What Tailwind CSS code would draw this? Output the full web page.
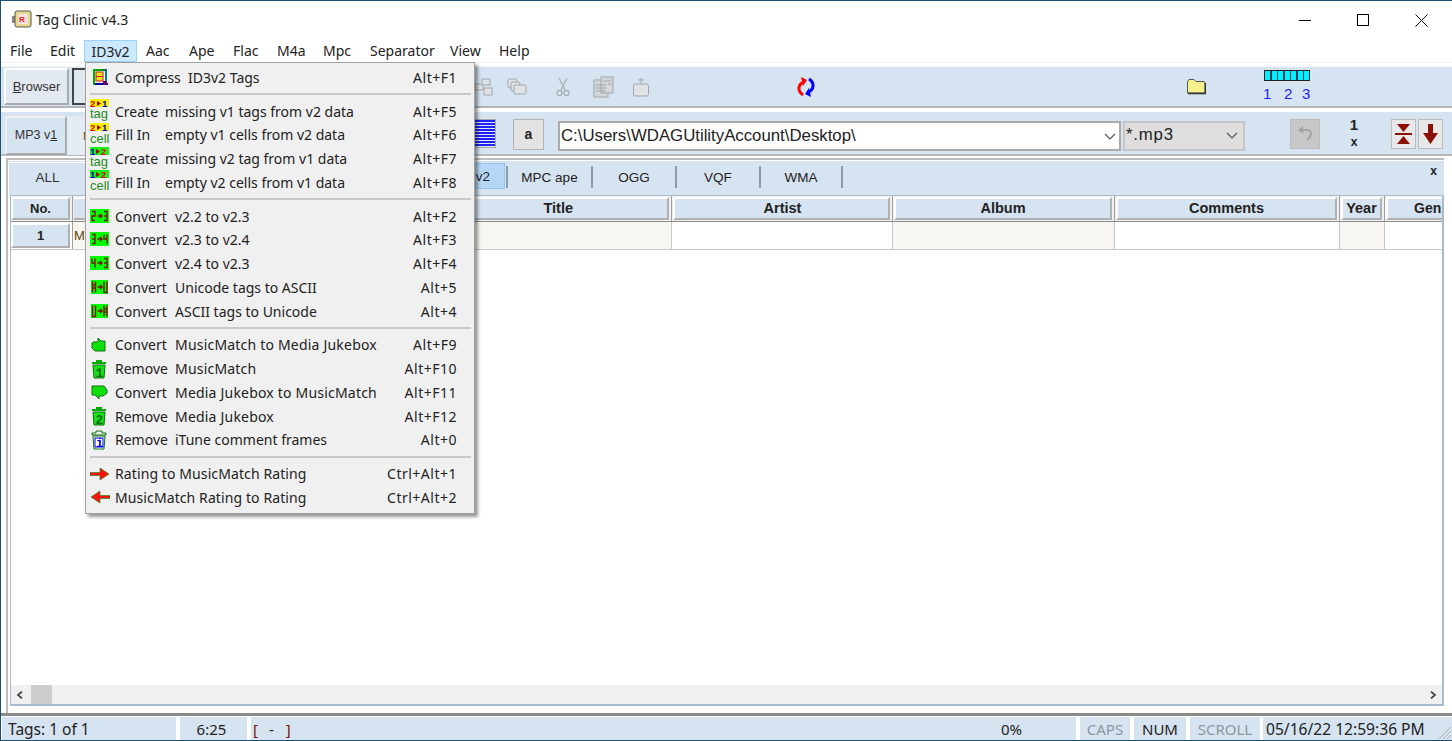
<!DOCTYPE html>
<html><head><meta charset="utf-8"><title>Tag Clinic v4.3</title>
<script src="https://cdn.jsdelivr.net/npm/@tailwindcss/browser@4"></script></head>
<body class="m-0 bg-white">
<div class="relative w-[1452px] h-[741px] overflow-hidden flex flex-col bg-white border-t border-b border-l border-[#1c4f70] font-['Noto_Sans',sans-serif] text-[14px] text-[#222]">

<!-- title bar -->
<div class="h-[39px] shrink-0 flex items-center bg-white">
  <svg class="ml-[11px] mt-[-3px]" width="20" height="20" viewBox="0 0 20 20"><rect x="0" y="7" width="3" height="7" fill="#888"/><rect x="3" y="2" width="16" height="16" rx="2" fill="#e6d98a" stroke="#555"/><rect x="6" y="5" width="10" height="10" fill="#f5e0e0"/><text x="7" y="13" font-size="8" font-weight="700" fill="#e02020" font-family="Liberation Sans">R</text></svg>
  <span class="ml-[4px] mt-[-3px] text-[14px] text-[#222]">Tag Clinic v4.3</span>
  <div class="ml-auto flex items-center h-full mt-[-1px] mr-[1px]">
    <div class="w-[58px] flex justify-center"><div class="w-[12px] h-px bg-black"></div></div>
    <div class="w-[58px] flex justify-center"><div class="w-[12px] h-[12px] border border-black"></div></div>
    <div class="w-[58px] flex justify-center mr-[1px]"><svg width="13" height="13" viewBox="0 0 13 13"><path d="M.5.5l12 12M12.5.5l-12 12" stroke="#111" fill="none"/></svg></div>
  </div>
</div>

<!-- menu bar -->
<div class="h-[23px] shrink-0 flex items-center text-[14px] leading-[20px] bg-white border-b border-[#f0f0f0] pl-[9px]">
  <span class="w-[40px]">File</span>
  <span class="w-[34px]">Edit</span>
  <span class="w-[53px] h-[22px] leading-[21px] text-center bg-[#cce8ff] border border-[#99d1ff] mr-[9px]">ID3v2</span>
  <span class="w-[43px]">Aac</span>
  <span class="w-[44px]">Ape</span>
  <span class="w-[44px]">Flac</span>
  <span class="w-[46px]">M4a</span>
  <span class="w-[47px]">Mpc</span>
  <span class="w-[80px]">Separator</span>
  <span class="w-[49px]">View</span>
  <span>Help</span>
</div>

<!-- toolbar 1 -->
<div class="h-[42px] shrink-0 mt-[3px] flex items-center bg-[#d6e3f0] border-t border-[#f6f6f6] border-b-2 border-b-[#b4b4b4] relative">
  <div class="ml-[3px] w-[65px] h-[37px] flex items-center justify-center bg-[#e3e9f0] border-2 border-t-white border-l-white border-r-[#aaa] border-b-[#aaa] font-['Liberation_Sans',sans-serif] text-[13px] text-[#333]"><span><u>B</u>rowser</span></div>
  <div class="ml-[3px] w-[30px] h-[37px] flex items-center justify-center border-2 border-[#444] bg-[#dfe7ef] text-[12px]">-</div>
  <div class="ml-[372px] flex items-center">
    <svg width="20" height="20" viewBox="0 0 20 20" fill="#dfe3e6" stroke="#a2a7ab"><rect x="1" y="7" width="8" height="6"/><rect x="8" y="2" width="8" height="6"/><rect x="10" y="11" width="8" height="7"/></svg>
    <svg class="ml-[13px]" width="22" height="20" viewBox="0 0 22 20" fill="#dfe3e6" stroke="#a2a7ab"><rect x="1" y="2" width="9" height="9" rx="2"/><rect x="4" y="5" width="9" height="9" rx="2"/><rect x="7" y="8" width="12" height="9" rx="1"/></svg>
    <svg class="ml-[27px]" width="14" height="20" viewBox="0 0 14 20" fill="none" stroke="#aab0b4" stroke-width="1.300"><path d="M3 1l6 12M11 1L5 13"/><circle cx="3.500" cy="16" r="2.500"/><circle cx="10.500" cy="16" r="2.500"/></svg>
    <svg class="ml-[23px]" width="22" height="22" viewBox="0 0 22 22" fill="#d2d7db" stroke="#a0a6ab"><rect x="1" y="4" width="14" height="17"/><rect x="8" y="1" width="12" height="16"/><path d="M3 9h10M3 12h10M3 15h10M10 5h8M15 8h4" fill="none"/></svg>
    <svg class="ml-[17px]" width="18" height="20" viewBox="0 0 18 20" fill="#dfe3e6" stroke="#a2a7ab"><rect x="1.500" y="7" width="15" height="12" rx="2"/><path d="M9 1v6M6 3h6" fill="none"/></svg>
  </div>
  <svg class="ml-[145px]" width="22" height="22" viewBox="0 0 22 22" fill="none" stroke-width="3"><path d="M9 6C3 8 2 15 8 19" stroke="#f00"/><path d="M6 1l6 3-4 6z" fill="#f00"/><path d="M13 16C19 14 20 7 14 3" stroke="#00f"/><path d="M16 21l-6-3 4-6z" fill="#00f"/></svg>
  <svg class="ml-[369px]" width="20" height="17" viewBox="0 0 20 17"><path d="M1.500 15V3.500L3 1.500h5l2 2h8l1 1.500V15z" fill="#f5f08c" stroke="#555"/><path d="M2 15.500h17.500V5" fill="none" stroke="#333" stroke-width="1.500"/></svg>
  <div class="ml-[58px] flex flex-col w-[48px]">
    <div class="w-[46px] h-[11px] border border-[#222] bg-[repeating-linear-gradient(90deg,#00f0ff_0,#00f0ff_5px,#1c3a5a_5px,#1c3a5a_6.500px)]"></div>
    <div class="mt-[3px] -ml-px flex text-[15px] leading-[20px] text-[#1d1df0] font-['Liberation_Sans',sans-serif]"><span class="w-[21px]">1</span><span class="w-[18px]">2</span><span>3</span></div>
  </div>
</div>

<!-- toolbar 2 -->
<div class="h-[47px] shrink-0 mt-[1px] flex items-center bg-[#d6e3f0] border-t-[3px] border-white border-b-2 border-b-[#b9b9b9] relative">
  <div class="ml-[4px] mt-[4px] w-[62px] h-[39px] flex items-center justify-center bg-[#d6e3f0] border-2 border-t-[#eee] border-l-[#eee] border-r-[#aaa] border-b-[#aaa] text-[12.500px] font-['Liberation_Sans',sans-serif] text-[#333]"><span>MP3 v<u>1</u></span></div>
  <div class="w-[30px] h-[39px] mt-[4px] bg-[#e4ebf2] pl-[16px] pt-[12px] text-[11px] text-[#664400] font-['Liberation_Sans',sans-serif]">M</div>
  <div class="ml-[373px] w-[26px] h-[29px] mt-[1px] border border-[#aaa] bg-[repeating-linear-gradient(180deg,#1e22f0_0,#1e22f0_2px,#dfe6f8_2px,#dfe6f8_3px)]"></div>
  <div class="ml-[17px] w-[31px] h-[31px] mt-[2px] flex items-center justify-center bg-[#e3e3e3] border border-[#b4b4b4] font-['Liberation_Sans',sans-serif] font-bold text-[14px]">a</div>
  <div class="ml-[14px] w-[563px] h-[30px] mt-[6px] flex items-center bg-white border-2 border-[#aaa] pl-[1px] font-['Liberation_Sans',sans-serif] text-[16.800px] leading-none text-[#222]">
    <span>C:\Users\WDAGUtilityAccount\Desktop\</span>
    <svg class="ml-auto mr-[3px]" width="12" height="7" viewBox="0 0 12 7"><path d="M1 1l5 5 5-5" fill="none" stroke="#555" stroke-width="1.200"/></svg>
  </div>
  <div class="ml-[2px] w-[122px] h-[30px] mt-[5px] flex items-center bg-[#dedede] border-2 border-[#c6c6c6] pl-[1px] font-['Liberation_Sans',sans-serif] text-[16.800px] leading-none text-[#222]">
    <span class="tracking-[0.8px]">*.mp3</span>
    <svg class="ml-auto mr-[5px]" width="12" height="7" viewBox="0 0 12 7"><path d="M1 1l5 5 5-5" fill="none" stroke="#555" stroke-width="1.200"/></svg>
  </div>
  <div class="ml-[45px] w-[30px] h-[30px] mt-[2px] flex items-center justify-center bg-[#c8c8c8] border border-[#bcbcbc]">
    <svg width="18" height="18" viewBox="0 0 18 18" fill="none" stroke="#a4a4a4" stroke-width="2"><path d="M6 5h5a4 4 0 0 1 4 4c0 3-2 4-4 6"/><path d="M7 1L2 5l5 4z" fill="#a4a4a4" stroke="none"/></svg>
  </div>
  <div class="ml-[19px] w-[30px] mt-[1px] flex flex-col items-center font-['Liberation_Sans',sans-serif] font-bold text-[#222]"><span class="text-[15px] leading-[18px]">1</span><span class="text-[12px] leading-[17px]">x</span></div>
  <div class="ml-[22px] w-[25px] h-[30px] mt-[2px] flex items-center justify-center bg-[#e8e8e8] border border-[#bbb]">
    <svg width="17" height="20" viewBox="0 0 17 20" fill="#8b1008"><path d="M2 0h13L8.500 8zM0 9h17v2H0zM8.500 12L15 20H2z"/></svg>
  </div>
  <div class="ml-[2px] w-[25px] h-[30px] mt-[2px] flex items-center justify-center bg-[#e8e8e8] border border-[#bbb]">
    <svg width="15" height="20" viewBox="0 0 15 20" fill="#8b1008"><path d="M5 0h5v9h5l-7.500 11L0 9h5z"/></svg>
  </div>
</div>

<!-- tab + grid frame -->
<div class="flex-1 min-h-0 mt-[2px] ml-[5px] mr-[8px] flex flex-col border-t-2 border-l-2 border-[#bcbcbc] bg-white relative">
  <div class="h-[35px] shrink-0 flex items-center bg-[#d6e3f0] border-t border-white text-[13.500px] font-['Liberation_Sans',sans-serif] relative">
    <div class="w-[78px] h-[33px] flex items-center justify-center border-t border-l border-white text-[#333]">ALL</div>
    <div class="ml-[372px] w-[47px] h-[26px] mb-[5px] pt-[3px] flex items-center justify-end pr-[14px] bg-[#b5d7f5] border border-dotted border-[#7fb0dd] text-[#222]">v2</div>
    <div class="h-[22px] mb-[3px] pt-[3px] w-[85px] ml-[1px] border-l-2 border-[#8b9aa8] flex items-center justify-center">MPC ape</div>
    <div class="h-[22px] mb-[3px] pt-[3px] w-[84px] border-l-2 border-[#8b9aa8] flex items-center justify-center">OGG</div>
    <div class="h-[22px] mb-[3px] pt-[3px] w-[84px] border-l-2 border-[#8b9aa8] flex items-center justify-center">VQF</div>
    <div class="h-[22px] mb-[3px] pt-[3px] w-[84px] border-x-2 border-[#8b9aa8] flex items-center justify-center">WMA</div>
    <span class="absolute right-[7px] top-[3px] font-bold text-[12px] leading-[14px]">x</span>
  </div>
  <div class="flex-1 min-h-0 ml-[2px] flex flex-col border-t border-l border-r-2 border-b-2 border-[#a8bccd] mb-[7px] overflow-hidden">
    <!-- header -->
    <div class="h-[26px] shrink-0 flex border-b border-[#8d8d8d] bg-[#f0f0f0] font-['Liberation_Sans',sans-serif] font-bold text-[14.500px] text-[#222]">
      <div class="w-[62px] shrink-0 border-r border-[#a0a0a0] pr-[2px] py-px"><div class="h-full bg-[#d6e3f0] border-2 border-t-white border-l-white border-b-[#b0b0b0] border-r-[#b0b0b0] flex items-center justify-center text-[13px]">No.</div></div>
      <div class="w-[599px] shrink-0 border-r border-[#a0a0a0] pl-[1px] pr-[2px] py-px"><div class="h-full bg-[#d6e3f0] border-t-2 border-t-white border-b-2 border-r-2 border-b-[#b0b0b0] border-r-[#b0b0b0] flex items-center justify-end pr-[94px]">Title</div></div>
      <div class="w-[221px] shrink-0 border-r border-[#a0a0a0] pl-[1px] pr-[2px] py-px"><div class="h-full bg-[#d6e3f0] border-2 border-t-white border-l-white border-b-[#b0b0b0] border-r-[#b0b0b0] flex items-center justify-center pl-[2px]">Artist</div></div>
      <div class="w-[222px] shrink-0 border-r border-[#a0a0a0] pl-[1px] pr-[2px] py-px"><div class="h-full bg-[#d6e3f0] border-2 border-t-white border-l-white border-b-[#b0b0b0] border-r-[#b0b0b0] flex items-center justify-center">Album</div></div>
      <div class="w-[225px] shrink-0 border-r border-[#a0a0a0] pl-[1px] pr-[2px] py-px"><div class="h-full bg-[#d6e3f0] border-2 border-t-white border-l-white border-b-[#b0b0b0] border-r-[#b0b0b0] flex items-center justify-center">Comments</div></div>
      <div class="w-[45px] shrink-0 border-r border-[#a0a0a0] pl-[1px] pr-[2px] py-px"><div class="h-full bg-[#d6e3f0] border-2 border-t-white border-l-white border-b-[#b0b0b0] border-r-[#b0b0b0] flex items-center justify-center whitespace-nowrap">Year</div></div>
      <div class="flex-1 min-w-0 pl-[1px] py-px"><div class="h-full bg-[#d6e3f0] border-2 border-t-white border-l-white border-b-[#b0b0b0] border-r-0 flex items-center pl-[26px] text-[14px]">Gen</div></div>
    </div>
    <!-- row -->
    <div class="h-[28px] shrink-0 flex border-b border-[#c8c8c8] font-['Liberation_Sans',sans-serif] text-[13px]">
      <div class="w-[62px] border-r border-[#a0a0a0] pr-[2px] py-px"><div class="h-full bg-[#d6e3f0] border-2 border-t-white border-l-white border-b-[#b0b0b0] border-r-[#b0b0b0] flex items-center justify-center font-bold text-[13px]">1</div></div>
      <div class="w-[599px] border-r border-[#c8c8c8] bg-[#f7f6f1] flex items-center pl-[1px] text-[#664400]">M</div>
      <div class="w-[221px] border-r border-[#c8c8c8]"></div>
      <div class="w-[222px] border-r border-[#c8c8c8] bg-[#f7f6f1]"></div>
      <div class="w-[225px] border-r border-[#c8c8c8]"></div>
      <div class="w-[45px] border-r border-[#c8c8c8] bg-[#f7f6f1]"></div>
      <div class="flex-1"></div>
    </div>
    <div class="flex-1 bg-white"></div>
    <!-- scrollbar -->
    <div class="h-[19px] shrink-0 flex items-center bg-[#f0f0f0]">
      <svg class="ml-[5px]" width="8" height="8" viewBox="0 0 8 8"><path d="M6 .5L2 4l4 3.500" fill="none" stroke="#444" stroke-width="1.700"/></svg>
      <div class="ml-[7px] w-[21px] h-[19px] bg-[#cdcdcd]"></div>
      <svg class="ml-auto mr-[5px]" width="8" height="8" viewBox="0 0 8 8"><path d="M2 .5L6 4 2 7.500" fill="none" stroke="#444" stroke-width="1.700"/></svg>
    </div>
  </div>
</div>

<!-- status bar -->
<div class="h-[27px] shrink-0 border-t-[3px] border-[#8a8a8a] flex bg-white gap-[4px] pt-px pl-[1px] text-[15px] leading-[24px] text-[#222] relative">
  <div class="w-[174px] bg-[#d6e3f0] pl-[6px] text-[15.500px]">Tags: 1 of 1</div>
  <div class="w-[67px] bg-[#d6e3f0] text-center pr-[4px]">6:25</div>
  <div class="w-[693px] bg-[#d6e3f0] pl-[2px] flex items-center"><span class="text-[#7a1500]">[</span><span class="ml-[11px]">-</span><span class="ml-[12px] text-[#7a1500]">]</span></div>
  <div class="w-[132px] bg-[#d6e3f0] -ml-[4px] pl-[57px]">0%</div>
  <div class="w-[50px] bg-[#d6e3f0] text-center text-[#8d979f]">CAPS</div>
  <div class="w-[52px] bg-[#d6e3f0] text-center">NUM</div>
  <div class="w-[70px] bg-[#d6e3f0] text-center text-[#8d979f]">SCROLL</div>
  <div class="w-[167px] bg-[#d6e3f0] -ml-[1px] pl-[3px] whitespace-nowrap text-[15.600px]">05/16/22 12:59:36 PM</div>
  <div class="flex-1 -ml-[4px] bg-[#d6e3f0] flex items-end justify-end"><svg width="18" height="18" viewBox="0 0 18 18" stroke="#b0b0b0" fill="none"><path d="M17 5L5 17M17 9l-8 8M17 13l-4 4"/></svg></div>
</div>

<!-- ID3v2 dropdown -->
<div class="absolute left-[84px] top-[61px] w-[390px] h-[452px] bg-[#f0f0f0] border border-[#a0a0a0] shadow-[3px_3px_3px_rgba(0,0,0,0.4)] pt-[2.600px] pl-[4px] pr-[17px] text-[14px] text-[#222]">
  <div class="flex items-center h-[23.750px]"><span class="w-[25px] pl-[1px]"><svg width="18" height="18" viewBox="0 0 18 18"><path d="M2 1h14v16H2z" fill="#e8f4e8"/><path d="M2 2h10" stroke="#0a0" stroke-width="2"/><path d="M12 2h4" stroke="#066" stroke-width="2"/><path d="M3 16h14" stroke="#00a" stroke-width="2"/><path d="M3 1v16" stroke="#0a0" stroke-width="2"/><path d="M15 2v14" stroke="#07a" stroke-width="2"/><rect x="5" y="4" width="7" height="9" fill="#f4e020" stroke="#d02020"/><path d="M5 8.500h7" stroke="#d02020"/><rect x="12" y="13" width="4" height="4" fill="#606"/></svg></span><span class="w-[73px]">Compress</span><span>ID3v2 Tags</span><span class="ml-auto tracking-[0.5px]">Alt+F1</span></div>
  <div class="h-[10px] flex items-center -mr-[14px]"><div class="w-full h-[2px] bg-[#c8c8c8]"></div></div>

  <div class="flex items-center h-[23.750px]"><svg class="w-[20px] mr-[5px] h-[24px]" viewBox="0 0 20 24"><rect x="0" y="0" width="19" height="8" fill="#f7f000"/><text x="0" y="7.500" font-size="9.500" font-weight="700" font-family="Liberation Sans" fill="#e00000">2</text><path d="M7 2l4 2.500-4 2.500z" fill="#a00"/><text x="12" y="7.500" font-size="9.500" font-weight="700" font-family="Liberation Sans" fill="#0000d0">1</text><text x="0" y="19" font-size="13" font-family="Liberation Sans" fill="#1c8c1c">tag</text></svg><span class="w-[50px]">Create</span><span>missing v1 tags from v2 data</span><span class="ml-auto tracking-[0.5px]">Alt+F5</span></div>
  <div class="flex items-center h-[23.750px]"><svg class="w-[20px] mr-[5px] h-[24px]" viewBox="0 0 20 24"><rect x="0" y="0" width="19" height="8" fill="#f7f000"/><text x="0" y="7.500" font-size="9.500" font-weight="700" font-family="Liberation Sans" fill="#e00000">2</text><path d="M7 2l4 2.500-4 2.500z" fill="#a00"/><text x="12" y="7.500" font-size="9.500" font-weight="700" font-family="Liberation Sans" fill="#0000d0">1</text><text x="0" y="20" font-size="13" font-family="Liberation Sans" fill="#1c8c1c">cell</text></svg><span class="w-[50px]">Fill In</span><span>empty v1 cells from v2 data</span><span class="ml-auto tracking-[0.5px]">Alt+F6</span></div>
  <div class="flex items-center h-[23.750px]"><svg class="w-[20px] mr-[5px] h-[24px]" viewBox="0 0 20 24"><rect x="0" y="0" width="19" height="8" fill="#18f018"/><text x="0" y="7.500" font-size="9.500" font-weight="700" font-family="Liberation Sans" fill="#0000d0">1</text><path d="M6 2l4 2.500-4 2.500z" fill="#a00"/><text x="11" y="7.500" font-size="9.500" font-weight="700" font-family="Liberation Sans" fill="#e00000">2</text><text x="0" y="19" font-size="13" font-family="Liberation Sans" fill="#1c8c1c">tag</text></svg><span class="w-[50px]">Create</span><span>missing v2 tag from v1 data</span><span class="ml-auto tracking-[0.5px]">Alt+F7</span></div>
  <div class="flex items-center h-[23.750px]"><svg class="w-[20px] mr-[5px] h-[24px]" viewBox="0 0 20 24"><rect x="0" y="0" width="19" height="8" fill="#18f018"/><text x="0" y="7.500" font-size="9.500" font-weight="700" font-family="Liberation Sans" fill="#0000d0">1</text><path d="M6 2l4 2.500-4 2.500z" fill="#a00"/><text x="11" y="7.500" font-size="9.500" font-weight="700" font-family="Liberation Sans" fill="#e00000">2</text><text x="0" y="20" font-size="13" font-family="Liberation Sans" fill="#1c8c1c">cell</text></svg><span class="w-[50px]">Fill In</span><span>empty v2 cells from v1 data</span><span class="ml-auto tracking-[0.5px]">Alt+F8</span></div>
  <div class="h-[10px] flex items-center -mr-[14px]"><div class="w-full h-[2px] bg-[#c8c8c8]"></div></div>

  <div class="flex items-center h-[23.750px]"><svg class="w-[20px] mr-[5px] h-[15px]" viewBox="0 0 20 15"><rect width="19" height="14" fill="#0f0"/><path d="M2 2.500h3v4.500H2v4.500h3M7.500 7h4.500M10 5l2 2-2 2M14 2.500h3v9h-3M14 7h3" stroke="#7a1500" stroke-width="1.400" fill="none"/></svg><span class="w-[60px]">Convert</span><span>v2.2 to v2.3</span><span class="ml-auto tracking-[0.5px]">Alt+F2</span></div>
  <div class="flex items-center h-[23.750px]"><svg class="w-[20px] mr-[5px] h-[15px]" viewBox="0 0 20 15"><rect width="19" height="14" fill="#0f0"/><path d="M2 2.500h3v9H2M2 7h3M7.500 7h4.500M10 5l2 2-2 2M14 2.500V7h3M17 2.500v9" stroke="#7a1500" stroke-width="1.400" fill="none"/></svg><span class="w-[60px]">Convert</span><span>v2.3 to v2.4</span><span class="ml-auto tracking-[0.5px]">Alt+F3</span></div>
  <div class="flex items-center h-[23.750px]"><svg class="w-[20px] mr-[5px] h-[15px]" viewBox="0 0 20 15"><rect width="19" height="14" fill="#0f0"/><path d="M2 2.500V7h3M5 2.500v9M7.500 7h4.500M10 5l2 2-2 2M14 2.500h3v9h-3M14 7h3" stroke="#7a1500" stroke-width="1.400" fill="none"/></svg><span class="w-[60px]">Convert</span><span>v2.4 to v2.3</span><span class="ml-auto tracking-[0.5px]">Alt+F4</span></div>
  <div class="flex items-center h-[23.750px]"><svg class="w-[20px] mr-[5px] h-[15px]" viewBox="0 0 20 15"><rect x="1" width="17" height="14" fill="#0f0"/><path d="M2.500 1.500v11M5.500 1.500v11M2.500 5h3M2.500 8h3M7.500 7h4.500M10 5l2 2-2 2M14 1.500v11h3v-11" stroke="#7a1500" stroke-width="1.400" fill="none"/></svg><span class="w-[60px]">Convert</span><span>Unicode tags to ASCII</span><span class="ml-auto tracking-[0.5px]">Alt+5</span></div>
  <div class="flex items-center h-[23.750px]"><svg class="w-[20px] mr-[5px] h-[15px]" viewBox="0 0 20 15"><rect x="1" width="17" height="14" fill="#0f0"/><path d="M2.500 1.500v11h3v-11M7.500 7h4.500M10 5l2 2-2 2M14 1.500v11M17 1.500v11M14 5h3M14 8h3" stroke="#7a1500" stroke-width="1.400" fill="none"/></svg><span class="w-[60px]">Convert</span><span>ASCII tags to Unicode</span><span class="ml-auto tracking-[0.5px]">Alt+4</span></div>
  <div class="h-[10px] flex items-center -mr-[14px]"><div class="w-full h-[2px] bg-[#c8c8c8]"></div></div>

  <div class="flex items-center h-[23.750px]"><svg class="w-[18px] mr-[7px] h-[18px]" viewBox="0 0 18 18"><path d="M3 6h5V2l3 3h4v10H5L2 12V7z" fill="#0ee00e" stroke="#107010"/></svg><span class="w-[60px]">Convert</span><span class="tracking-[0.2px]">MusicMatch to Media Jukebox</span><span class="ml-auto tracking-[0.5px]">Alt+F9</span></div>
  <div class="flex items-center h-[23.750px]"><svg class="w-[18px] mr-[7px] h-[20px]" viewBox="0 0 18 20"><path d="M6 1h6v2h4v2H2V3h4z" fill="#0a0"/><path d="M3 6h12l-1 13H4z" fill="#18e018" stroke="#107010"/><text x="5.500" y="17.500" font-size="13" font-weight="700" font-family="Liberation Mono" fill="#107010">1</text></svg><span class="w-[60px]">Remove</span><span class="tracking-[0.2px]">MusicMatch</span><span class="ml-auto tracking-[0.5px]">Alt+F10</span></div>
  <div class="flex items-center h-[23.750px]"><svg class="w-[18px] mr-[7px] h-[18px]" viewBox="0 0 18 18"><path d="M2 3h12l3 4v3l-4 3H9v3l-4-4H2z" fill="#0ee00e" stroke="#107010"/></svg><span class="w-[60px]">Convert</span><span class="tracking-[0.2px]">Media Jukebox to MusicMatch</span><span class="ml-auto tracking-[0.5px]">Alt+F11</span></div>
  <div class="flex items-center h-[23.750px]"><svg class="w-[18px] mr-[7px] h-[20px]" viewBox="0 0 18 20"><path d="M6 1h6v2h4v2H2V3h4z" fill="#0a0"/><path d="M3 6h12l-1 13H4z" fill="#18e018" stroke="#107010"/><text x="5.500" y="17.500" font-size="13" font-weight="700" font-family="Liberation Mono" fill="#107010">2</text></svg><span class="w-[60px]">Remove</span><span class="tracking-[0.2px]">Media Jukebox</span><span class="ml-auto tracking-[0.5px]">Alt+F12</span></div>
  <div class="flex items-center h-[23.750px]"><svg class="w-[18px] mr-[7px] h-[20px]" viewBox="0 0 18 20"><path d="M6 1h6v2h4v2H2V3h4z" fill="#eee" stroke="#107010"/><path d="M3 6h12l-1 13H4z" fill="#fff" stroke="#107010"/><rect x="5" y="8" width="8" height="9" fill="#fff" stroke="#00d"/><text x="6" y="16.500" font-size="12" font-weight="700" font-family="Liberation Mono" fill="#0000e0">i</text></svg><span class="w-[60px]">Remove</span><span>iTune comment frames</span><span class="ml-auto tracking-[0.5px]">Alt+0</span></div>
  <div class="h-[10px] flex items-center -mr-[14px]"><div class="w-full h-[2px] bg-[#c8c8c8]"></div></div>

  <div class="flex items-center h-[23.750px]"><svg class="w-[20px] mr-[5px] h-[14px]" viewBox="0 0 20 14"><path d="M0 5.500h10V1l9 6-9 6V8.500H0z" fill="#ff1010" stroke="#0a8a0a" stroke-width=".6"/></svg><span class="tracking-[0.1px]">Rating to MusicMatch Rating</span><span class="ml-auto tracking-[0.5px]">Ctrl+Alt+1</span></div>
  <div class="flex items-center h-[23.750px]"><svg class="w-[20px] mr-[5px] h-[14px]" viewBox="0 0 20 14"><path d="M20 5.500H10V1L1 7l9 6V8.500h10z" fill="#ff1010" stroke="#0a8a0a" stroke-width=".6"/></svg><span class="tracking-[0.1px]">MusicMatch Rating to Rating</span><span class="ml-auto tracking-[0.5px]">Ctrl+Alt+2</span></div>
</div>

</div>
</body></html>
